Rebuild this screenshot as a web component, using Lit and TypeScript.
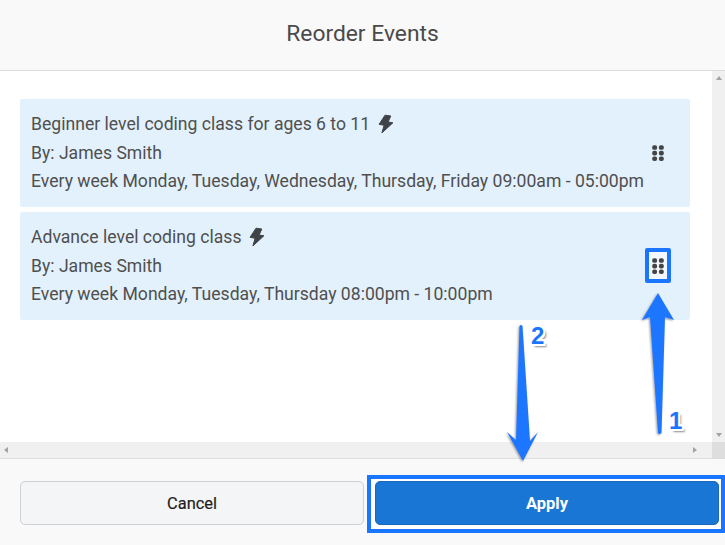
import { LitElement, html, css, svg } from "lit";
import { customElement } from "lit/decorators.js";

const bolt = html`<svg class="bolt" viewBox="0 0 16 20" width="16" height="20"><path d="M7 1.2 12.8 2 10.1 8 14.9 8.8 3.9 18.9 6.1 11.3 1.1 10.3Z" fill="#3f4347" stroke="#3f4347" stroke-width="1" stroke-linejoin="round"/></svg>`;
const grip = html`<svg class="grip" viewBox="0 0 12 16" width="12" height="16"><g fill="#444">
${[0.2, 5.8, 11.4].map((y) => svg`<rect x="0.2" y=${y} width="4.9" height="4.6" rx="1.9"/><rect x="6.9" y=${y} width="4.9" height="4.6" rx="1.9"/>`)}
</g></svg>`;

@customElement("app-root")
export class AppRoot extends LitElement {
  static styles = css`
    :host { display: block; position: relative; width: 725px; height: 545px; overflow: hidden; background: #fff; font-family: Roboto, "Liberation Sans", sans-serif; color: #4f4f4f; }
    .page { display: flex; flex-direction: column; height: 545px; }
    header { height: 71px; flex: none; box-sizing: border-box; display: flex; align-items: center; justify-content: center; background: #f9f9f9; border-bottom: 1px solid #dcdcdc; font-size: 22.8px; color: #4a4a4a; font-weight: 400; }
    header span { position: relative; top: -2px; }
    .mid { flex: 1; display: grid; grid-template-columns: 1fr 13px; grid-template-rows: 1fr 16px; min-height: 0; }
    .content { padding: 28px 22px 0 20px; display: flex; flex-direction: column; gap: 5px; }
    .card { height: 108px; box-sizing: border-box; background: #e3f1fd; border-radius: 2px; padding: 10px 11px; display: flex; align-items: center; justify-content: space-between; }
    .lines { font-size: 17.6px; line-height: 28.7px; color: #4f4f4f; white-space: nowrap; }
    .title { display: flex; align-items: center; gap: 8px; }
    .grip { margin-right: 15px; flex: none; }
    .bolt { flex: none; }
    .vbar { background: #f0f0f0; display: flex; flex-direction: column; justify-content: space-between; align-items: center; padding: 5px 0; }
    .hbar { background: #f0f0f0; display: flex; justify-content: space-between; align-items: center; padding: 0 15px 0 4px; }
    .corner { background: #dedede; }
    .t { width: 0; height: 0; border-style: solid; border-color: transparent; }
    .t.up { border-width: 0 3.5px 4px; border-bottom-color: #a3a3a3; }
    .t.down { border-width: 4px 3.5px 0; border-top-color: #a3a3a3; }
    .t.left { border-width: 3.5px 4px 3.5px 0; border-right-color: #a3a3a3; }
    .t.right { border-width: 3.5px 0 3.5px 4px; border-left-color: #a3a3a3; }
    footer { height: 87px; flex: none; box-sizing: border-box; border-top: 1px solid #dcdcdc; background: #f9f9f9; display: grid; grid-template-columns: 344px 344px; grid-template-rows: 44px; gap: 11px; padding: 22px 0 0 20px; }
    button { height: 44px; border-radius: 5px; font: 500 16px Roboto, sans-serif; box-sizing: border-box; padding: 0; position: relative; z-index: 2; }
    .cancel { background: #f4f5f7; border: 1px solid #cfd0d4; color: #1e1e1e; font-weight: 400; font-size: 16.4px; -webkit-text-stroke: .2px #1e1e1e; }
    .apply { background: #1a76d4; border: 1px solid #1869bd; color: #fff; font-weight: 700; font-size: 16.5px; }
    .hl { position: absolute; box-sizing: border-box; border: 4px solid #1a76ff; border-radius: 2px; z-index: 1; }
    .hl.g { left: 645px; top: 248px; width: 26px; height: 35px; display: flex; align-items: center; justify-content: center; background: #f2f8fd; }
    .hl.g .grip { margin: 0; }
    .hl.a { left: 367px; top: 475px; width: 358px; height: 58px; background: #fff; border-radius: 0; }
    .arrows { position: absolute; left: 0; top: 0; pointer-events: none; z-index: 3; }
    .num { position: absolute; z-index: 3; font: 700 24px "Liberation Sans", sans-serif; color: #1a76ff; line-height: 24px; text-shadow: -2px -2px 0 #fff, 2px -2px 0 #fff, -2px 2px 0 #fff, 2px 2px 0 #fff, 0 -2px 0 #fff, -2px 0 0 #fff, 2px 0 0 #fff, 0 2px 0 #fff, 3px 3px 2px #8a8a8a; }
    .n1 { left: 669px; top: 409px; }
    .n2 { left: 531px; top: 324px; }
  `;

  render() {
    return html`
      <div class="page">
        <header><span>Reorder Events</span></header>
        <div class="mid">
          <div class="content">
            <div class="card">
              <div class="lines">
                <div class="title">Beginner level coding class for ages 6 to 11 ${bolt}</div>
                <div>By: James Smith</div>
                <div>Every week Monday, Tuesday, Wednesday, Thursday, Friday 09:00am - 05:00pm</div>
              </div>
              ${grip}
            </div>
            <div class="card">
              <div class="lines">
                <div class="title">Advance level coding class ${bolt}</div>
                <div>By: James Smith</div>
                <div>Every week Monday, Tuesday, Thursday 08:00pm - 10:00pm</div>
              </div>
            </div>
          </div>
          <div class="vbar"><i class="t up"></i><i class="t down"></i></div>
          <div class="hbar"><i class="t left"></i><i class="t right"></i></div>
          <div class="corner"></div>
        </div>
        <footer>
          <button class="cancel">Cancel</button>
          <button class="apply">Apply</button>
        </footer>
      </div>
      <div class="hl g">${grip}</div>
      <div class="hl a"></div>
      <svg class="arrows" width="725" height="545" viewBox="0 0 725 545">
        <defs><filter id="s" x="-50%" y="-10%" width="200%" height="120%"><feDropShadow dx="-1" dy="1" stdDeviation="1" flood-color="#555" flood-opacity=".6"/></filter></defs>
        <path filter="url(#s)" fill="#1a76ff" d="M658 293 674 320 665 317 661.5 433 Q659.5 435 658 433 L650 317 642 320Z"/>
        <path filter="url(#s)" fill="#1a76ff" d="M519.5 326 Q521 324 522.5 326 L530 441 538 432 523 461 507 432 516 440Z"/>
      </svg>
      <span class="num n1">1</span>
      <span class="num n2">2</span>
    `;
  }
}
